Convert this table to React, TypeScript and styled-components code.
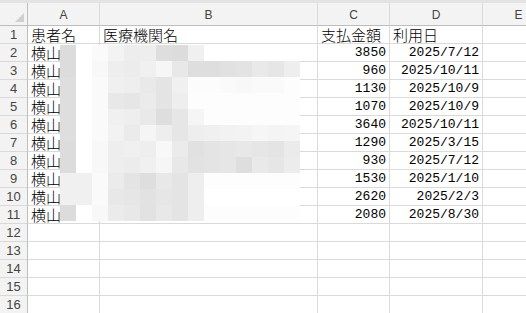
import styled, { createGlobalStyle } from 'styled-components';

const GlobalStyle = createGlobalStyle`
  html, body {
    margin: 0;
    padding: 0;
    background: #ffffff;
  }
  body {
    width: 526px;
    height: 313px;
    overflow: hidden;
  }
`;

const COLUMNS = ['A', 'B', 'C', 'D', 'E'];

const ROWS: [string, string, string, string][] = [
  ['患者名', '医療機関名', '支払金額', '利用日'],
  ['横山', '', '3850', '2025/7/12'],
  ['横山', '', '960', '2025/10/11'],
  ['横山', '', '1130', '2025/10/9'],
  ['横山', '', '1070', '2025/10/9'],
  ['横山', '', '3640', '2025/10/11'],
  ['横山', '', '1290', '2025/3/15'],
  ['横山', '', '930', '2025/7/12'],
  ['横山', '', '1530', '2025/1/10'],
  ['横山', '', '2620', '2025/2/3'],
  ['横山', '', '2080', '2025/8/30'],
];

const TOTAL_ROWS = 16;

// grey level of each 16px block of the pixelated area
const MOSAIC: number[][] = [
  [220, 255, 250, 243, 237, 238, 222, 220, 240, 255, 255, 255, 255, 255, 255],
  [220, 255, 248, 238, 236, 240, 246, 232, 222, 222, 225, 227, 233, 230, 238],
  [222, 255, 250, 240, 238, 233, 228, 240, 252, 252, 250, 248, 250, 250, 253],
  [222, 255, 250, 232, 230, 235, 228, 238, 253, 253, 253, 253, 253, 253, 253],
  [222, 255, 250, 240, 238, 233, 222, 230, 245, 253, 253, 253, 253, 253, 253],
  [222, 255, 250, 242, 235, 245, 238, 230, 238, 240, 242, 243, 246, 244, 245],
  [220, 255, 248, 238, 240, 238, 248, 235, 225, 228, 230, 232, 230, 228, 235],
  [220, 255, 248, 238, 236, 240, 246, 232, 226, 228, 230, 222, 233, 230, 236],
  [240, 240, 250, 235, 228, 222, 232, 228, 238, 253, 253, 253, 253, 253, 253],
  [240, 240, 250, 232, 230, 226, 230, 228, 238, 255, 255, 255, 255, 255, 255],
  [220, 255, 248, 235, 232, 226, 232, 228, 238, 253, 253, 253, 253, 253, 253],
];

const Page = styled.div`
  position: relative;
  width: 526px;
  height: 313px;
  overflow: hidden;
  background: #ffffff;
`;

const TopEdge = styled.div`
  height: 3px;
  background: #e3e3e3;
`;

const Sheet = styled.div`
  display: grid;
  grid-template-columns: 28px 72px 218px 72px 93px 72px;
  grid-template-rows: 23px repeat(${TOTAL_ROWS}, 18px);
`;

const Corner = styled.div`
  display: flex;
  align-items: flex-end;
  justify-content: flex-end;
  padding: 0 3px 3px 0;
  background: #f3f3f3;
  border-right: 1px solid #bdbdbd;
  border-bottom: 1px solid #bdbdbd;
  box-sizing: border-box;
`;

const CornerMark = styled.div`
  width: 9px;
  height: 9px;
  background: #cfcfcf;
  clip-path: polygon(100% 0, 100% 100%, 0 100%);
`;

const ColumnHead = styled.div`
  display: flex;
  align-items: center;
  justify-content: center;
  background: #f3f3f3;
  border-right: 1px solid #d9d9d9;
  border-bottom: 1px solid #bdbdbd;
  box-sizing: border-box;
  font-family: 'Liberation Sans Narrow', 'Liberation Sans', sans-serif;
  font-size: 12px;
  color: #444444;
  padding-top: 1px;
`;

const RowHead = styled.div`
  display: flex;
  align-items: center;
  justify-content: center;
  background: #f3f3f3;
  border-right: 1px solid #bdbdbd;
  border-bottom: 1px solid #d9d9d9;
  box-sizing: border-box;
  font-family: 'Liberation Sans Narrow', 'Liberation Sans', sans-serif;
  font-size: 13px;
  color: #444444;
`;

const Cell = styled.div<{ $numeric?: boolean }>`
  display: flex;
  align-items: flex-end;
  justify-content: ${({ $numeric }) => ($numeric ? 'flex-end' : 'flex-start')};
  padding: ${({ $numeric }) => ($numeric ? '0 3px 0 0' : '0 0 0 3px')};
  border-right: 1px solid #dadada;
  border-bottom: 1px solid #dadada;
  box-sizing: border-box;
  white-space: nowrap;
  color: #000000;
  font-family: ${({ $numeric }) =>
    $numeric
      ? "'Liberation Mono', 'Noto Sans CJK JP', monospace"
      : "'Noto Sans CJK JP', sans-serif"};
  font-size: ${({ $numeric }) => ($numeric ? '13px' : '15px')};
  font-weight: ${({ $numeric }) => ($numeric ? 400 : 300)};
  line-height: 17px;
`;

const Mosaic = styled.div`
  position: absolute;
  left: 60px;
  top: 45px;
  display: grid;
  grid-template-columns: repeat(15, 16px);
  grid-auto-rows: 16px;
`;

const Block = styled.div<{ $level: number }>`
  background: ${({ $level }) => `rgb(${$level}, ${$level}, ${$level})`};
`;

export default function App() {
  return (
    <>
      <GlobalStyle />
      <Page>
        <TopEdge />
        <Sheet>
          <Corner>
            <CornerMark />
          </Corner>
          {COLUMNS.map((c) => (
            <ColumnHead key={c}>{c}</ColumnHead>
          ))}
          {Array.from({ length: TOTAL_ROWS }, (_, i) => {
            const row = ROWS[i];
            const isHeader = i === 0;
            return [
              <RowHead key={`h${i}`}>{i + 1}</RowHead>,
              <Cell key={`a${i}`}>{row ? row[0] : ''}</Cell>,
              <Cell key={`b${i}`}>{row ? row[1] : ''}</Cell>,
              <Cell key={`c${i}`} $numeric={!isHeader}>
                {row ? row[2] : ''}
              </Cell>,
              <Cell key={`d${i}`} $numeric={!isHeader}>
                {row ? row[3] : ''}
              </Cell>,
              <Cell key={`e${i}`} />,
            ];
          })}
        </Sheet>
        <Mosaic>
          {MOSAIC.flatMap((line, r) =>
            line.map((level, c) => <Block key={`${r}-${c}`} $level={level} />)
          )}
        </Mosaic>
      </Page>
    </>
  );
}
